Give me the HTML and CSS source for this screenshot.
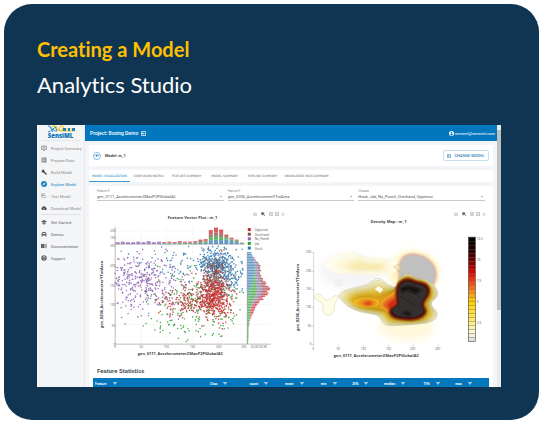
FILE: index.html
```html
<!DOCTYPE html>
<html lang="en">
<head>
<meta charset="utf-8">
<title>Creating a Model</title>
<link rel="stylesheet" href="styles.css">
</head>
<body>
<svg width="0" height="0" class="defs" aria-hidden="true">
  <symbol id="funnel" viewBox="0 0 10 10"><path d="M0 1h10M2 4h6M4 7h2" stroke="currentColor" stroke-width="1.6"/></symbol>
  <symbol id="camera" viewBox="0 0 10 10"><path d="M1 3h2l1-1h2l1 1h2v6H1z" fill="none" stroke="currentColor"/><circle cx="5" cy="6" r="1.5" fill="currentColor"/></symbol>
  <symbol id="lens" viewBox="0 0 10 10"><circle cx="4" cy="4" r="3" fill="#777" stroke="#444" stroke-width="1.5"/><path d="M6 6l3.5 3.5" stroke="#444" stroke-width="2"/></symbol>
  <symbol id="plus" viewBox="0 0 10 10"><path d="M1 1h8v8H1zM5 3v4M3 5h4" fill="none" stroke="currentColor" stroke-width="1.3"/></symbol>
  <symbol id="minus" viewBox="0 0 10 10"><path d="M1 1h8v8H1zM3 5h4" fill="none" stroke="currentColor" stroke-width="1.5"/></symbol>
  <symbol id="home" viewBox="0 0 10 10"><path d="M1 5l4-3 4 3M3 5v3h4V5" fill="none" stroke="currentColor"/></symbol>
  <symbol id="switch" viewBox="0 0 10 10"><path d="M1 1h8v8H1zM1 5h5M4 3l2 2-2 2" fill="none" stroke="currentColor" stroke-width="1.4"/></symbol>
</svg>
<main class="card">
  <h1>Creating a Model</h1>
  <p class="subtitle">Analytics Studio</p>
  <div class="app">
    <aside class="side">
      <div class="logo">
        <svg viewBox="0 0 28 8" aria-hidden="true"><path d="M1 1c4 0 4 5 9 5M1 7c4 0 5-5 9-5M3 2l3 5M8 1l2 5" fill="none" stroke="#2d8bc9"/><path d="M5 2c2-2 4-1 5 1s3 4 5 2 1-5-1-4-3 5 1 5h12" fill="none" stroke="#f4c52a" stroke-width="1.2"/><path d="M16 3h3v3h-3zM21 3h2v3h-2zM25 3h3v3h-3z" fill="#1f80c0"/><path d="M19 4h2M23 4h2" stroke="#f4c52a"/></svg>
        <span>SensiML</span>
      </div>
      <nav>
        <a href="#"><svg viewBox="0 0 12 12"><path d="M1 2h10v7H1zM4 11h4M3 4h6M3 6h6" fill="none" stroke="currentColor" stroke-width="1.4"/></svg>Project Summary</a>
        <a href="#"><svg viewBox="0 0 12 12"><path d="M1 1h10v10H1z" fill="currentColor"/><path d="M1 4h10M1 7h10M4 1v10" stroke="#ddd"/></svg>Prepare Data</a>
        <a href="#" class="dark"><svg viewBox="0 0 12 12"><circle cx="4" cy="4" r="3" fill="currentColor"/><path d="M5 5l6 6" stroke="currentColor" stroke-width="2.5"/><path d="M0 1l3 3" stroke="#f3f4f7" stroke-width="1.5"/></svg><span>Build Model</span></a>
        <a href="#" class="active"><svg viewBox="0 0 12 12"><circle cx="6" cy="6" r="6" fill="currentColor"/><path d="M9 3L7 7 3 9l2-4z" fill="#fff"/></svg>Explore Model</a>
        <a href="#"><svg viewBox="0 0 12 12"><path d="M0 2h8M0 5h8M0 8h4M5 8l2 2 4-4" fill="none" stroke="currentColor" stroke-width="1.4"/></svg>Test Model</a>
        <a href="#" class="dark"><svg viewBox="0 0 12 12"><path d="M3 10a3 3 0 0 1-.5-5.500a4 4 0 0 1 7.500 1A2.500 2.500 0 0 1 10 10z" fill="currentColor"/><path d="M6 5v4M4.500 7.500L6 9l1.500-1.500" fill="none" stroke="#fff"/></svg><span>Download Model</span></a>
      </nav>
      <nav class="more">
        <a href="#"><svg viewBox="0 0 12 12"><path d="M0 5l6-3 6 3-6 3zM3 7v3l3 1 3-1V7L6 9z" fill="currentColor"/></svg>Get Started</a>
        <a href="#"><svg viewBox="0 0 12 12"><path d="M1 6l2-4h6l2 4v5H9V9H3v2H1z" fill="currentColor"/><path d="M3 6l1-2h4l1 2z" fill="#eee"/></svg>Demos</a>
        <a href="#"><svg viewBox="0 0 12 12"><path d="M0 2h7v8H0z" fill="currentColor"/><path d="M7 2.500h4v7H7M8 5h2M8 7h2" fill="none" stroke="currentColor"/></svg>Documentation</a>
        <a href="#"><svg viewBox="0 0 12 12"><circle cx="6" cy="6" r="5.500" fill="currentColor"/><path d="M4 5c0-3 4-3 4-.5C8 6 6 6 6 7.500M6 8.500V10" fill="none" stroke="#fff" stroke-width="1.2"/></svg>Support</a>
      </nav>
    </aside>
    <section class="main">
      <header class="bar">
        <strong>Project: Boxing Demo</strong>
        <button type="button" class="icon" aria-label="Switch project"><svg><use href="#switch"/></svg></button>
        <span class="user"><svg viewBox="0 0 12 12" aria-hidden="true"><circle cx="6" cy="6" r="6" fill="#fff"/><circle cx="6" cy="4.500" r="2" fill="#0277bd"/><path d="M2.500 9c1-3 6-3 7 0-2 2-5 2-7 0z" fill="#0277bd"/></svg>sensiml@sensiml.com</span>
      </header>
      <div class="body">
        <div class="panel model">
          <button type="button" class="back" aria-label="Back"><svg viewBox="0 0 12 12"><path d="M10 6H2M5.500 2.500L2 6l3.500 3.500" fill="none" stroke="currentColor" stroke-width="1.7"/></svg></button>
          <strong>Model: m_1</strong>
          <button type="button" class="change"><svg><use href="#switch"/></svg>CHANGE MODEL</button>
        </div>
        <div class="panel tabs" role="tablist">
          <button type="button" role="tab" aria-selected="true">MODEL VISUALIZATION</button>
          <button type="button" role="tab">CONFUSION MATRIX</button>
          <button type="button" role="tab">FEATURE SUMMARY</button>
          <button type="button" role="tab">MODEL SUMMARY</button>
          <button type="button" role="tab">PIPELINE SUMMARY</button>
          <button type="button" role="tab">KNOWLEDGE PACK SUMMARY</button>
        </div>
        <div class="panel content">
          <div class="fields">
            <div class="field"><label for="fx">Feature X</label><select id="fx"><option>gen_0111_AccelerometerZMaxP2PGlobalAC</option></select></div>
            <div class="field"><label for="fy">Feature Y</label><select id="fy"><option>gen_0206_AccelerometerYTotArea</option></select></div>
            <div class="field"><label for="cl">Classes</label><select id="cl"><option>Hook, Jab, No_Punch, Overhand, Uppercut</option></select></div>
          </div>
          <div class="charts">
            <figure>
              <div class="tools">
                <button type="button" class="icon" aria-label="Save image"><svg><use href="#camera"/></svg></button>
                <button type="button" class="icon zoom" aria-label="Zoom"><svg><use href="#lens"/></svg></button>
                <button type="button" class="icon" aria-label="Zoom in"><svg><use href="#plus"/></svg></button>
                <button type="button" class="icon" aria-label="Zoom out"><svg><use href="#minus"/></svg></button>
                <button type="button" class="icon" aria-label="Reset"><svg><use href="#home"/></svg></button>
              </div>
              <svg class="chart" id="scatter" viewBox="90 216 200 148"></svg>
            </figure>
            <figure>
              <div class="tools">
                <button type="button" class="icon" aria-label="Save image"><svg><use href="#camera"/></svg></button>
                <button type="button" class="icon zoom" aria-label="Zoom"><svg><use href="#lens"/></svg></button>
                <button type="button" class="icon" aria-label="Zoom in"><svg><use href="#plus"/></svg></button>
                <button type="button" class="icon" aria-label="Zoom out"><svg><use href="#minus"/></svg></button>
                <button type="button" class="icon" aria-label="Reset"><svg><use href="#home"/></svg></button>
              </div>
              <svg class="chart" id="density" viewBox="290 216 200 148"></svg>
            </figure>
          </div>
          <h2>Feature Statistics</h2>
          <table>
            <colgroup><col class="c-feature"><col class="c-class"><col class="c-count"><col class="c-mean"><col class="c-min"><col class="c-q1"><col class="c-median"><col class="c-q3"><col></colgroup>
            <thead><tr>
              <th>Feature<svg><use href="#funnel"/></svg></th><th>Class<svg><use href="#funnel"/></svg></th><th>count<svg><use href="#funnel"/></svg></th><th>mean<svg><use href="#funnel"/></svg></th><th>min<svg><use href="#funnel"/></svg></th><th>25%<svg><use href="#funnel"/></svg></th><th>median<svg><use href="#funnel"/></svg></th><th>75%<svg><use href="#funnel"/></svg></th><th>max<svg><use href="#funnel"/></svg></th>
            </tr></thead>
          </table>
        </div>
      </div>
    </section>
    <div class="scroll" aria-hidden="true"><div class="thumb"></div></div>
  </div>
</main>
<script src="charts.js"></script>
</body>
</html>
```
FILE: styles.css
```css
* { box-sizing: border-box; }
body { margin: 4px; background: #fff; font-family: Roboto, "Liberation Sans", sans-serif; }
.defs { position: absolute; }
button { margin: 0; padding: 0; border: 0; background: none; font: inherit; color: inherit; }
.card { background: #0f3553; border-radius: 28px; padding: 28px 38px 33px 33px; }
h1, .subtitle { margin: 0; font-family: Lato, "Liberation Sans", sans-serif; line-height: 35px; font-variant-ligatures: none; }
h1 { font-size: 20px; font-weight: 700; color: #ffc000; }
.subtitle { font-size: 22px; color: #fff; margin-bottom: 23px; }
.app { display: flex; background: #f3f5f8; font-size: 4px; color: #555; }

.side { width: 48px; flex: none; background: #f4f5f7; border-right: 1px solid #e6e9ed; }
.logo { display: flex; flex-direction: column; align-items: center; height: 16px; margin: 0 4px; border-bottom: 1px solid #e4e7ea; }
.logo svg { width: 28px; height: 8px; }
.logo span { font: 800 6px/6px "Open Sans", sans-serif; color: #0b6fb5; }
nav { padding-top: 1px; margin: 0 4px; }
nav a { display: flex; align-items: center; gap: 4px; height: 12px; color: #8b8b8b; text-decoration: none; white-space: nowrap; }
nav a svg { width: 6px; height: 6px; flex: none; }
.dark svg { color: #444; }
nav .active { color: #2183c4; }
.more { border-top: 1px solid #dfe2e6; }
.more a { color: #5c6468; }

.main { flex: 1; min-width: 0; }
.bar { display: flex; align-items: center; gap: 3px; height: 16px; padding: 0 2px 0 5px; background: #0277bd; color: #fff; }
.bar strong { font-size: 5px; font-weight: 500; }
.icon { display: flex; }
.icon svg { width: 5px; height: 5px; }
.user { display: flex; align-items: center; gap: 1px; margin-left: auto; }
.user svg { width: 5px; height: 5px; }
.body { display: flex; flex-direction: column; gap: 4px; padding: 4px 4px 0; }
.panel { background: #fff; }
.model { display: flex; align-items: center; gap: 4px; height: 21px; padding: 0 4px; }
.model strong { font-weight: 700; color: #444; }
.back { display: flex; align-items: center; justify-content: center; width: 8px; height: 8px; border: 1px solid #7fbbe0; border-radius: 50%; color: #0277bd; }
.back svg { width: 5px; height: 5px; }
.change { display: flex; align-items: center; justify-content: center; gap: 3px; width: 46px; height: 11px; margin-left: auto; border: 1px solid #c3e0f2; border-radius: 2px; color: #2b83b8; font-weight: 500; }
.change svg { width: 4px; height: 4px; }
.tabs { display: flex; height: 12px; font-family: "DejaVu Sans", sans-serif; font-size: 3px; color: #666; }
.tabs button { min-width: 38px; padding: 0 3px; white-space: nowrap; }
.tabs [aria-selected] { color: #0277bd; border-bottom: 1px solid #3d99d2; padding-top: 1px; }
.content { padding: 3px 4px 0; }
.fields { display: grid; grid-template-columns: repeat(3, 1fr); gap: 4px; padding: 0 4px; }
.field { position: relative; display: flex; flex-direction: column; }
.field::after { content: ""; position: absolute; right: 2px; bottom: 4px; border: 1px solid transparent; border-top-color: #555; border-bottom: 0; }
.field label { font-size: 3px; line-height: 4px; color: #888; }
.field select { appearance: none; width: 100%; height: 8px; padding: 0; border: 0; border-bottom: 1px solid #c9c9c9; border-radius: 0; background: none; font: 4px/7px Roboto, sans-serif; color: #555; }
.charts { display: flex; margin: 10px -3px 0; }
figure { flex: 1; min-width: 0; margin: 0; }
.tools { display: flex; justify-content: flex-end; align-items: center; gap: 2px; height: 5px; padding-right: 6px; color: #999; }
.tools svg { width: 4px; height: 4px; }
.tools .zoom { margin: 0 2px; }
.chart { display: block; width: 100%; font-family: "Open Sans", sans-serif; }
.chart .title { font-size: 4px; font-weight: 700; fill: #444; text-anchor: middle; }
.chart .tick { font-size: 3px; fill: #555; text-anchor: middle; }
.chart .end { text-anchor: end; }
.chart .key { font-size: 3px; fill: #444; }
h2 { margin: 3px 4px 4px; font-size: 6px; line-height: 6px; color: #4a555c; }
table { width: 100%; border-collapse: collapse; table-layout: fixed; background: #0277bd; color: #fff; }
th { height: 9px; padding: 4px 0 0 2px; font: 700 3px/4px "Open Sans", sans-serif; text-align: left; vertical-align: top; white-space: nowrap; }
th svg { width: 4px; height: 4px; margin-left: 6px; vertical-align: top; }
.c-feature { width: 29%; }
.c-class { width: 10%; }
.c-count, .c-mean { width: 9%; }
.c-min, .c-q1, .c-q3 { width: 8%; }
.c-median { width: 10%; }
.scroll { width: 4px; flex: none; padding-top: 5px; background: #ececec; }
.thumb { height: 70%; background: #c1c1c1; }
```
FILE: charts.js
```js
const NS = 'http://www.w3.org/2000/svg';
const C = { blue: '#2f78b4', green: '#2ca02c', purple: '#8e63b5', brown: '#80524a', red: '#c92a2e' };

function add(parent, name, attrs, text) {
  const el = document.createElementNS(NS, name);
  for (const k in attrs) el.setAttribute(k, attrs[k]);
  if (text !== undefined) el.textContent = text;
  parent.appendChild(el);
  return el;
}

let seed = 7;
function rnd() {
  seed = (seed * 1664525 + 1013904223) % 4294967296;
  return seed / 4294967296;
}
function gauss() {
  return Math.sqrt(-2 * Math.log(rnd() + 1e-9)) * Math.cos(2 * Math.PI * rnd());
}
function lerp(stops, v) {
  for (let i = 1; i < stops.length; i++) {
    if (v <= stops[i][0]) {
      const [a, p] = stops[i - 1], [b, q] = stops[i];
      const t = Math.max(0, (v - a) / (b - a));
      return Array.isArray(p) ? p.map((c, k) => c + (q[k] - c) * t) : p + (q - p) * t;
    }
  }
  return stops[stops.length - 1][1];
}

/* Feature vector plot */
const s = document.getElementById('scatter');
add(s, 'text', { class: 'title', x: 192, y: 219 }, 'Feature Vector Plot : m_1');
for (const x of [141, 166, 192, 218]) add(s, 'path', { d: `M${x} 227V343`, stroke: '#eee', 'stroke-width': .5 });
for (const y of [231, 238, 265, 285, 304, 324]) add(s, 'path', { d: `M115 ${y}H270`, stroke: '#eee', 'stroke-width': .5 });

const tops = [2, 2.5, 2, 2, 2.5, 2, 3, 2, 2.5, 2, 2.5, 2, 3, 2.5, 2.5, 3, 4.5, 5, 14, 16.5, 14.5, 9.5, 6.5, 4.5, 1.5];
tops.forEach((h, i) => {
  const x = 115 + i * 5.15;
  let parts;
  if (i < 9) parts = [['purple', 1]];
  else if (i < 16) parts = [['green', .35], ['purple', .25], ['red', .4]];
  else parts = [['blue', .28], ['green', .2], ['brown', .22], ['red', .3]];
  if (i > 20) parts = [['blue', .5], ['green', .2], ['brown', .15], ['red', .15]];
  let y = 244;
  for (const [c, f] of parts) {
    y -= h * f;
    add(s, 'rect', { x: x + .5, y, width: 4, height: h * f, fill: C[c], opacity: .75 });
  }
});

const clusters = [
  ['purple', 320, 138, 280, 19, 14], ['purple', 60, 165, 285, 25, 20],
  ['green', 150, 205, 296, 24, 15], ['green', 110, 190, 320, 30, 14],
  ['blue', 60, 172, 264, 24, 8], ['blue', 230, 213, 262, 8, 8], ['blue', 200, 227, 272, 8, 11],
  ['red', 130, 188, 302, 17, 7], ['brown', 70, 195, 295, 20, 8],
  ['brown', 240, 213, 277, 7, 10], ['red', 430, 214, 298, 8, 10]
];
for (const [c, n, cx, cy, sx, sy] of clusters) {
  let d = '';
  for (let i = 0; i < n; i++) {
    const x = cx + gauss() * sx, y = cy + gauss() * sy;
    if (x > 115 && x < 243 && y > 246 && y < 342.500) d += `M${x.toFixed(1)} ${y.toFixed(1)}h.01`;
  }
  add(s, 'path', { d, stroke: C[c], 'stroke-width': 1.6, 'stroke-linecap': 'round', opacity: .85 });
}

const lengths = [[252, 4], [258, 8], [265, 13], [275, 15], [282, 18], [288, 23], [294, 19], [300, 14], [306, 9], [312, 6], [318, 3], [325, 1.5], [343, 1]];
const shares = [
  [252, [1, 0, 0, 0, 0]], [262, [.65, 0, .15, .2, 0]], [275, [.48, .12, .2, .18, .02]],
  [288, [.12, .32, .2, .16, .2]], [298, [.05, .4, .2, .1, .25]], [310, [.05, .35, 0, .1, .5]], [320, [0, .9, 0, 0, .1]], [343, [0, 1, 0, 0, 0]]
];
for (let y = 252; y < 343; y += 1.6) {
  const len = lerp(lengths, y) * (.86 + rnd() * .2);
  let x = 246.500;
  lerp(shares, y).forEach((f, k) => {
    add(s, 'rect', { x, y, width: len * f, height: 1.3, fill: C[['blue', 'green', 'purple', 'brown', 'red'][k]], opacity: .75 });
    x += len * f;
  });
}
add(s, 'path', { d: 'M115 227V343.500H270M115 244H244M246.500 252V343.500', fill: 'none', stroke: '#777', 'stroke-width': .5 });
[[200, 231], [100, 238], [250, 246], [200, 266], [150, 286], [100, 305], [50, 325], [0, 344]].forEach(([t, y]) => add(s, 'text', { class: 'tick end', x: 115, y: y + 1 }, t));
[[0, 115], [50, 141], [100, 166], [150, 192], [200, 218], [250, 243]].forEach(([t, x]) => add(s, 'text', { class: 'tick', x, y: 347 }, t));
add(s, 'text', { class: 'tick', x: 258, y: 347 }, '20 40 60 80');
add(s, 'text', { class: 'title', x: 180, y: 354 }, 'gen_0111_AccelerometerZMaxP2PGlobalAC');
add(s, 'text', { class: 'title', transform: 'translate(103 294) rotate(-90)' }, 'gen_0206_AccelerometerYTotArea');
[['Uppercut', 'red'], ['Overhand', 'brown'], ['No_Punch', 'purple'], ['Jab', 'green'], ['Hook', 'blue']].forEach(([t, c], i) => {
  const y = 228 + i * 4.6;
  add(s, 'rect', { x: 247, y, width: 3, height: 3, fill: C[c] });
  add(s, 'text', { class: 'key', x: 254, y: y + 3 }, t);
});

/* Density map */
const m = document.getElementById('density');
const defs = add(m, 'defs', {});
const soft = add(defs, 'filter', { id: 'soft', x: '-30%', y: '-30%', width: '160%', height: '160%' });
add(soft, 'feGaussianBlur', { stdDeviation: 1.2 });
const haze = add(defs, 'filter', { id: 'haze', x: '-30%', y: '-30%', width: '160%', height: '160%' });
add(haze, 'feGaussianBlur', { stdDeviation: 4 });

function smooth(p) {
  const mid = (a, b) => [(a[0] + b[0]) / 2, (a[1] + b[1]) / 2];
  let d = 'M' + mid(p[p.length - 1], p[0]);
  p.forEach((q, i) => { d += 'Q' + q + ' ' + mid(q, p[(i + 1) % p.length]); });
  return d + 'Z';
}
function nest(outer, inner, n, colors, line) {
  for (let k = 0; k < n; k++) {
    const t = k / (n - 1);
    const pts = outer.map((a, i) => [a[0] + (inner[i][0] - a[0]) * t, a[1] + (inner[i][1] - a[1]) * t]);
    const c = lerp(colors, t).map(Math.round);
    add(m, 'path', { d: smooth(pts), fill: `rgb(${c})`, stroke: line, 'stroke-width': .25 });
  }
}
function ring(cx, cy, rx, ry) {
  return Array.from({ length: 10 }, (_, i) => [cx + rx * Math.cos(i * Math.PI / 5), cy + ry * Math.sin(i * Math.PI / 5)]);
}

add(m, 'text', { class: 'title', x: 387, y: 223 }, 'Density Map : m_1');
add(m, 'ellipse', { cx: 350, cy: 272, rx: 32, ry: 16, fill: '#f4f4f6', filter: 'url(#haze)' });
add(m, 'ellipse', { cx: 405, cy: 326, rx: 28, ry: 14, fill: '#fff8da', filter: 'url(#haze)' });
add(m, 'ellipse', { cx: 412, cy: 272, rx: 24, ry: 20, fill: '#fff0b8', filter: 'url(#haze)' });

const cloud = [[321, 264], [327, 258], [338, 254], [352, 249], [362, 257], [380, 257], [396, 259], [398, 271], [382, 275], [360, 274], [343, 275], [330, 272]];
nest(cloud, cloud.map(([x, y]) => [368 + (x - 368) * .4, 267 + (y - 267) * .25]), 8, [[0, [255, 254, 244]], [.5, [255, 250, 222]], [1, [249, 235, 175]]], '#eee6c8');

const grey = [[400, 258], [407, 254], [420, 255], [430, 262], [434, 270], [434, 280], [428, 290], [422, 296], [408, 292], [399, 286], [397, 270]];
add(m, 'path', { d: smooth(grey), fill: '#ffe08a', stroke: '#ffe9a6', 'stroke-width': 4, filter: 'url(#soft)' });
add(m, 'path', { d: smooth(grey), fill: '#ee9c9c', stroke: '#f2a0a0', 'stroke-width': 1, filter: 'url(#soft)' });
add(m, 'path', { d: smooth(grey), fill: '#c0c0c0', filter: 'url(#soft)' });
add(m, 'path', { d: 'M392 267l4-3 5 3-4 4z', fill: '#eee0b0', 'fill-opacity': .5, stroke: '#b09b60', 'stroke-width': .3 });
add(m, 'circle', { cx: 337, cy: 282, r: 3.5, fill: '#f2f2f3', stroke: '#e0e0e0', 'stroke-width': .3 });

add(m, 'path', { d: 'M314 295c3-3 5-1 8 2 4 4 6 3 9 0 4-4 7-2 5 2-3 5-3 6-3 10 0 6-9 8-11 2-1-4 1-6-2-9-4-3-8-3-6-7z', fill: '#fffce6', stroke: '#bcb68c', 'stroke-width': .35 });

const outer = [[336, 293], [352, 287], [366, 285], [377, 276], [387, 285], [396, 288], [397, 277], [407, 272], [415, 279], [424, 278], [433, 285], [438, 295], [427, 303], [438, 314], [430, 322], [412, 324], [395, 325], [382, 325], [378, 315], [368, 313], [352, 310], [340, 301]];
const inner = [[355, 299], [360, 297], [368, 296], [376, 298], [384, 294], [394, 290], [397, 282], [407, 277], [413, 281], [421, 283], [428, 288], [428, 297], [423, 303], [425, 311], [421, 318], [409, 320], [397, 319], [389, 317], [385, 310], [372, 308], [360, 306], [355, 302]];
nest(outer, inner, 12, [[0, [255, 253, 232]], [.25, [252, 242, 180]], [.5, [246, 220, 100]], [.75, [236, 190, 36]], [1, [220, 158, 22]]], '#7c7030');
add(m, 'path', { d: 'M373 289l4-4 5 4-3 4z', fill: '#fffbe6', stroke: '#a89a60', 'stroke-width': .3 });
nest(ring(365, 302, 14, 5.5), ring(367, 303, 3, 2), 6, [[0, [243, 196, 40]], [.5, [244, 150, 34]], [1, [226, 78, 28]]], '#c4860f');
const wedge = [[376, 304], [386, 295], [397, 290], [402, 300], [400, 314], [390, 314], [383, 310]];
nest(wedge, [[387, 304], [390, 301], [396, 298], [399, 302], [398, 309], [392, 310], [388, 307]], 5, [[0, [245, 170, 40]], [1, [214, 40, 24]]], '#b4541a');

const dark = [[396, 284], [405, 278], [414, 282], [425, 284], [428, 292], [423, 299], [420, 305], [425, 311], [418, 318], [404, 319], [390, 316], [388, 309], [397, 305], [395, 296]];
add(m, 'path', { d: smooth(dark), fill: '#7a3a08', stroke: '#8a5a08', 'stroke-width': 3, filter: 'url(#soft)' });
add(m, 'path', { d: smooth(dark), fill: '#c01810', stroke: '#b81810', 'stroke-width': 1, filter: 'url(#soft)' });
add(m, 'path', { d: smooth(dark), fill: '#2e0a08', filter: 'url(#soft)' });
add(m, 'path', { d: smooth(dark.map(([x, y]) => [408 + (x - 408) * .9, 300 + (y - 300) * .9])), fill: '#343030' });
add(m, 'path', { d: 'M400 287q8-4 20 3l-6 3-8-4-6 4zM399 312l5-1 4 1 3 2-4 1z', fill: '#0c0505', opacity: .7, filter: 'url(#soft)' });
add(m, 'path', { d: 'M399 296l9 5 6 5M398 288l18 6', fill: 'none', stroke: '#111', 'stroke-width': .5 });

add(m, 'path', { d: 'M312.500 252V344M312.500 252.500h-2M312.500 271h-2M312.500 289h-2M312.500 307h-2M312.500 325.500h-2M312.500 343.500h-2M312.500 343.500v2M337 344v2M362 344v2M387 344v2M411.500 344v2M436.500 344v2', fill: 'none', stroke: '#999', 'stroke-width': .4 });
[[250, 252], [200, 271], [150, 289], [100, 307], [50, 325], [0, 343]].forEach(([t, y]) => add(m, 'text', { class: 'tick end', x: 310, y: y + 1 }, t));
[[0, 312], [50, 337], [100, 362], [150, 387], [200, 411], [250, 436]].forEach(([t, x]) => add(m, 'text', { class: 'tick', x, y: 349 }, t));
add(m, 'text', { class: 'title', x: 375, y: 356 }, 'gen_0111_AccelerometerZMaxP2PGlobalAC');
add(m, 'text', { class: 'title', transform: 'translate(298 297) rotate(-90)' }, 'gen_0206_AccelerometerYTotArea');

const scale = [[0, [0, 0, 0]], [.12, [40, 0, 0]], [.25, [150, 0, 0]], [.33, [220, 0, 0]], [.45, [245, 85, 25]], [.55, [250, 160, 20]], [.63, [255, 212, 0]], [.8, [255, 232, 105]], [.93, [255, 250, 220]], [1, [225, 225, 225]]];
for (let i = 0; i < 26; i++) {
  add(m, 'rect', { x: 466.500, y: 237 + i * 4, width: 7, height: 4, fill: `rgb(${lerp(scale, i / 25).map(Math.round)})`, stroke: '#4a3a20', 'stroke-width': .25 });
}
add(m, 'rect', { x: 466.500, y: 237, width: 7, height: 104, fill: 'none', stroke: '#555', 'stroke-width': .5 });
[['12.5', 239], ['10', 260], ['7.5', 281], ['5', 302], ['2.5', 322]].forEach(([t, y]) => add(m, 'text', { class: 'key', x: 475, y: y + 1 }, t));
```
